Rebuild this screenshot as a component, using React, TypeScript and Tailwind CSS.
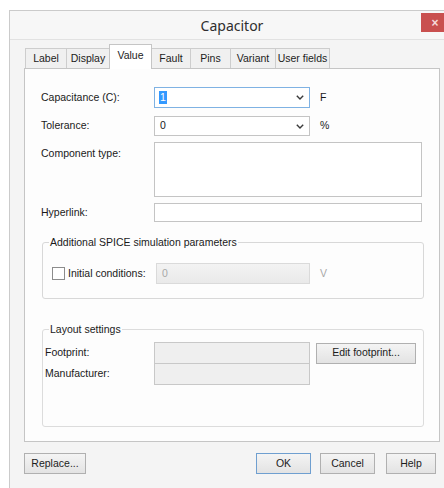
import type { ReactNode } from "react";

const tabs = [
  { name: "Label", w: "w-[42px]" },
  { name: "Display", w: "w-[44px]" },
  { name: "Value", w: "w-[43px]", active: true },
  { name: "Fault", w: "w-[40px]" },
  { name: "Pins", w: "w-[41px]" },
  { name: "Variant", w: "w-[46px]" },
  { name: "User fields", w: "w-[55px]" },
];

function Chevron({ muted }: { muted?: boolean }) {
  return (
    <svg width="8" height="5" viewBox="0 0 8 5" className="shrink-0">
      <polyline
        points="0.8,0.8 4,4 7.2,0.8"
        fill="none"
        stroke={muted ? "#b5b5b5" : "#3a3a3a"}
        strokeWidth="1.4"
      />
    </svg>
  );
}

function Button({ children, w, primary }: { children: ReactNode; w: string; primary?: boolean }) {
  return (
    <div
      className={`${w} h-[21px] flex items-center justify-center border bg-gradient-to-b from-[#f4f4f4] to-[#e3e3e3] text-[10.5px] text-[#1c1c1c] ${
        primary ? "border-[#6f9fd0]" : "border-[#b0b0b0]"
      }`}
    >
      {children}
    </div>
  );
}

export default function App() {
  return (
    <div className="w-[444px] h-[488px] overflow-hidden bg-white pt-[10px] pl-[9px] font-['Liberation_Sans',Arial,sans-serif]">
      <div className="w-[446px] h-[490px] border-l border-t border-[#cbcbcb] bg-[#f4f4f4] flex flex-col">
        {/* title bar */}
        <div className="h-[29px] flex items-start border-b border-[#e2e2e2] pr-[6px] bg-[#f7f7f7]">
          <div className="flex-1 h-full flex items-center justify-center pl-[33px] pt-[1px] font-['Noto_Sans',sans-serif] text-[14px] text-[#2e2e2e]">
            Capacitor
          </div>
          <div className="mt-[2px] w-[28px] h-[19px] bg-[#c9504f] flex items-center justify-center text-[#f6dada] text-[12px] font-bold leading-none">
            ×
          </div>
        </div>

        <div className="pl-[14px] pt-[4px] flex flex-col">
          {/* tab strip */}
          <div className="h-[24px] flex items-end pl-[1px] text-[10.5px] text-[#1c1c1c]">
            {tabs.map((t) =>
              t.active ? (
                <div
                  key={t.name}
                  className={`${t.w} h-[25px] -mb-px -ml-px relative z-10 border-l border-t border-r border-[#c5c5c5] bg-white flex items-start justify-center pt-[3px]`}
                >
                  {t.name}
                </div>
              ) : (
                <div
                  key={t.name}
                  className={`${t.w} h-[20px] -ml-px first:ml-0 border-l border-t border-r border-[#cdcdcd] bg-[#f0f0f0] flex items-center justify-center`}
                >
                  {t.name}
                </div>
              )
            )}
          </div>

          {/* tab page */}
          <div className="w-[416px] h-[374px] border border-[#c5c5c5] bg-[#fdfdfd] pl-[16px] text-[10.5px] text-[#1a1a1a]">
            <div className="mt-[18px] flex items-center">
              <div className="w-[113px]">Capacitance (C):</div>
              <div className="w-[156px] h-[21px] border border-[#7fb2e3] bg-white flex items-center pl-[4px] pr-[5px]">
                <span className="bg-[#3399ff] text-white px-[1px] leading-[13px]">1</span>
                <span className="flex-1" />
                <Chevron />
              </div>
              <div className="ml-[10px]">F</div>
            </div>

            <div className="mt-[8px] flex items-center">
              <div className="w-[113px]">Tolerance:</div>
              <div className="w-[156px] h-[20px] border border-[#c4c4c4] bg-white flex items-center pl-[5px] pr-[5px]">
                <span>0</span>
                <span className="flex-1" />
                <Chevron />
              </div>
              <div className="ml-[10px]">%</div>
            </div>

            <div className="mt-[6px] flex items-start">
              <div className="w-[113px] pt-[4px]">Component type:</div>
              <div className="w-[268px] h-[55px] border border-[#c4c4c4] bg-white" />
            </div>

            <div className="mt-[6px] flex items-center">
              <div className="w-[113px]">Hyperlink:</div>
              <div className="w-[268px] h-[19px] border border-[#c4c4c4] bg-white" />
            </div>

            <fieldset className="mt-[14px] ml-[1px] w-[382px] h-[63px] border border-[#d8d8d8] rounded-[3px] pl-[9px]">
              <legend className="-ml-[3px] px-[1px] leading-[13px]">Additional SPICE simulation parameters</legend>
              <div className="mt-[14px] flex items-center">
                <div className="w-[104px] flex items-center">
                  <div className="w-[13px] h-[13px] border border-[#8c8c8c] bg-white" />
                  <span className="ml-[3px]">Initial conditions:</span>
                </div>
                <div className="w-[154px] h-[21px] border border-[#dadada] bg-gradient-to-b from-[#f3f3f3] to-[#e9e9e9] flex items-center pl-[5px] text-[#a8a8a8]">
                  0
                </div>
                <div className="ml-[10px] text-[#a8a8a8]">V</div>
              </div>
            </fieldset>

            <fieldset className="mt-[24px] ml-[1px] w-[382px] h-[104px] border border-[#dcdcdc] rounded-[3px] pl-[2px]">
              <legend className="ml-[4px] px-[1px] leading-[13px]">Layout settings</legend>
              <div className="mt-[6px] flex items-center">
                <div className="w-[109px]">Footprint:</div>
                <div className="w-[156px] h-[22px] border border-[#c8c8c8] bg-[#efefef]" />
                <div className="ml-[6px]">
                  <Button w="w-[100px]">Edit footprint...</Button>
                </div>
              </div>
              <div className="-mt-px flex items-center">
                <div className="w-[109px]">Manufacturer:</div>
                <div className="w-[156px] h-[22px] border border-[#c8c8c8] bg-[#efefef]" />
              </div>
            </fieldset>
          </div>

          {/* dialog buttons */}
          <div className="mt-[11px] w-[412px] flex items-center">
            <Button w="w-[62px]">Replace...</Button>
            <div className="flex-1" />
            <Button w="w-[55px]" primary>
              OK
            </Button>
            <div className="ml-[9px]">
              <Button w="w-[55px]">Cancel</Button>
            </div>
            <div className="ml-[11px]">
              <Button w="w-[50px]">Help</Button>
            </div>
          </div>
        </div>
      </div>
    </div>
  );
}
